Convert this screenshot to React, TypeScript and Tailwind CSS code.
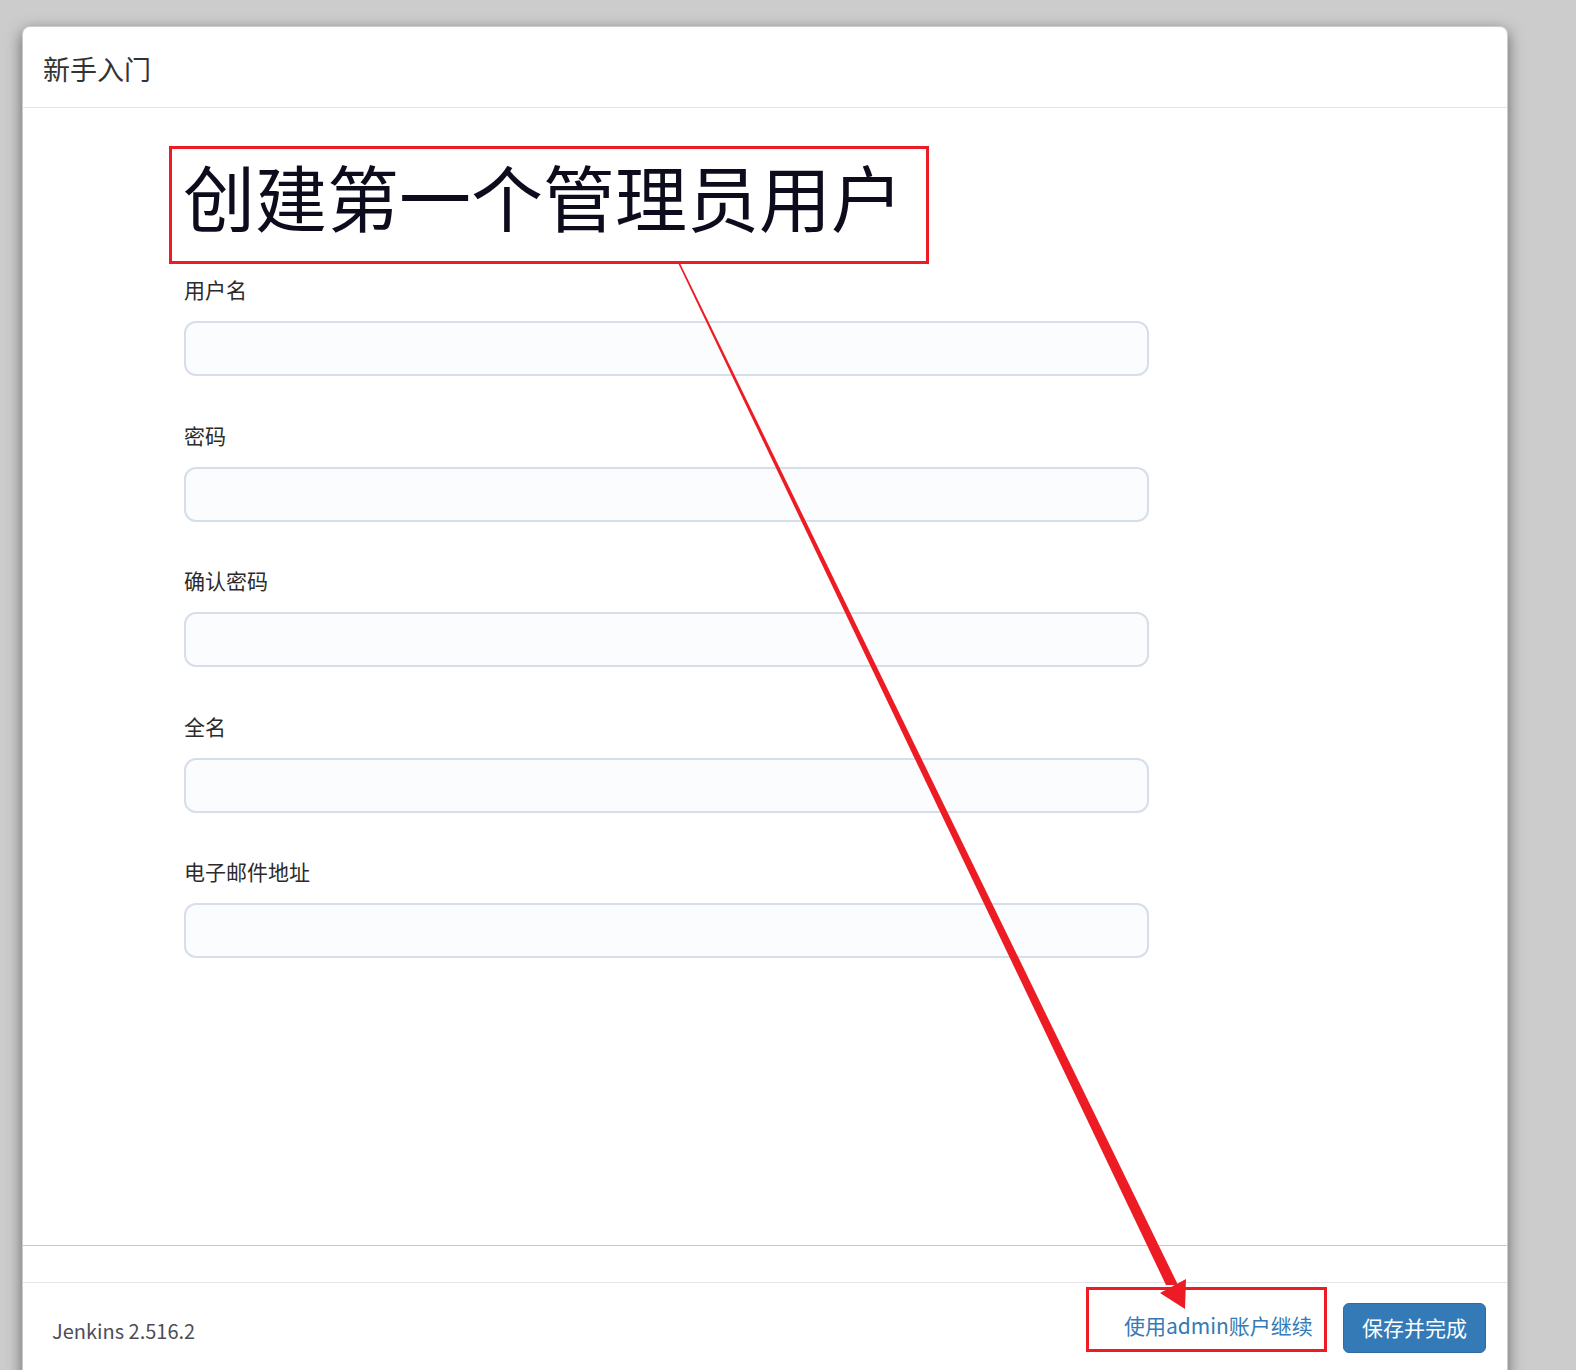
const fields = ["用户名", "密码", "确认密码", "全名", "电子邮件地址"];

export default function App() {
  return (
    <div
      className="relative h-[1370px] w-[1576px] overflow-hidden bg-[#cccccc] pl-[22px] pt-[26px]"
      style={{ fontFamily: '"Noto Sans CJK SC", "Noto Sans", sans-serif' }}
    >
      <div className="w-[1486px] rounded-t-[8px] border border-[rgba(0,0,0,0.2)] bg-white shadow-[0_5px_15px_rgba(0,0,0,0.5)]">
        {/* Header */}
        <div className="flex h-[81px] items-center border-b border-[#e5e5e5] px-[20px] pt-[3px]">
          <h4 className="text-[27px] leading-none text-[#333]">新手入门</h4>
        </div>

        {/* Body */}
        <div className="h-[1138px] border-b border-[#c8c8c8] pl-[146px] pt-[38px]">
          <div className="w-[760px] border-[3px] border-[#ed1c24] pb-[26px] pl-[11px] pt-[6px]">
            <h1 className="text-[72px] leading-[80px] text-[#0c0c1c]">创建第一个管理员用户</h1>
          </div>

          <div className="ml-[15px] mt-[11px] flex w-[965px] flex-col gap-[44.5px]">
            {fields.map((label) => (
              <div key={label}>
                <label className="mb-[18px] block text-[21px] leading-[28px] text-[#2b2b2b]">{label}</label>
                <input
                  type="text"
                  className="block h-[55px] w-full rounded-[12px] border-2 border-[#d6deea] bg-[#fbfcfd] px-4 text-[21px] outline-none"
                />
              </div>
            ))}
          </div>
        </div>

        <div className="h-[36px]" />

        {/* Footer */}
        <div className="flex justify-between border-t border-[#e5e5e5] pb-[22px] pl-[22px] pr-[21px] pt-[4px]">
          <span className="mb-[6px] self-end pl-[7px] text-[20px] leading-[30px] text-[#4d4d57]">Jenkins 2.516.2</span>
          <div className="flex items-end gap-[16px]">
            <div className="h-[65px] w-[241px] border-[3px] border-[#ed1c24] pl-[35px] pt-[20px]">
              <a href="#" className="whitespace-nowrap text-[21px] leading-[30px] text-[#337ab7]">
                使用admin账户继续
              </a>
            </div>
            <button className="mb-[-1px] h-[50px] rounded-[6px] border border-[#2e6da4] bg-[#337ab7] px-[18px] text-[21px] text-white">
              保存并完成
            </button>
          </div>
        </div>
      </div>

      {/* annotation arrow */}
      <svg className="pointer-events-none absolute left-0 top-0" width="1576" height="1370" viewBox="0 0 1576 1370">
        <polygon points="678.1,263 679.9,263 1178,1285 1166,1285" fill="#ed1c24" />
        <polygon points="1160,1293 1186,1279 1185,1309" fill="#ed1c24" />
      </svg>
    </div>
  );
}
